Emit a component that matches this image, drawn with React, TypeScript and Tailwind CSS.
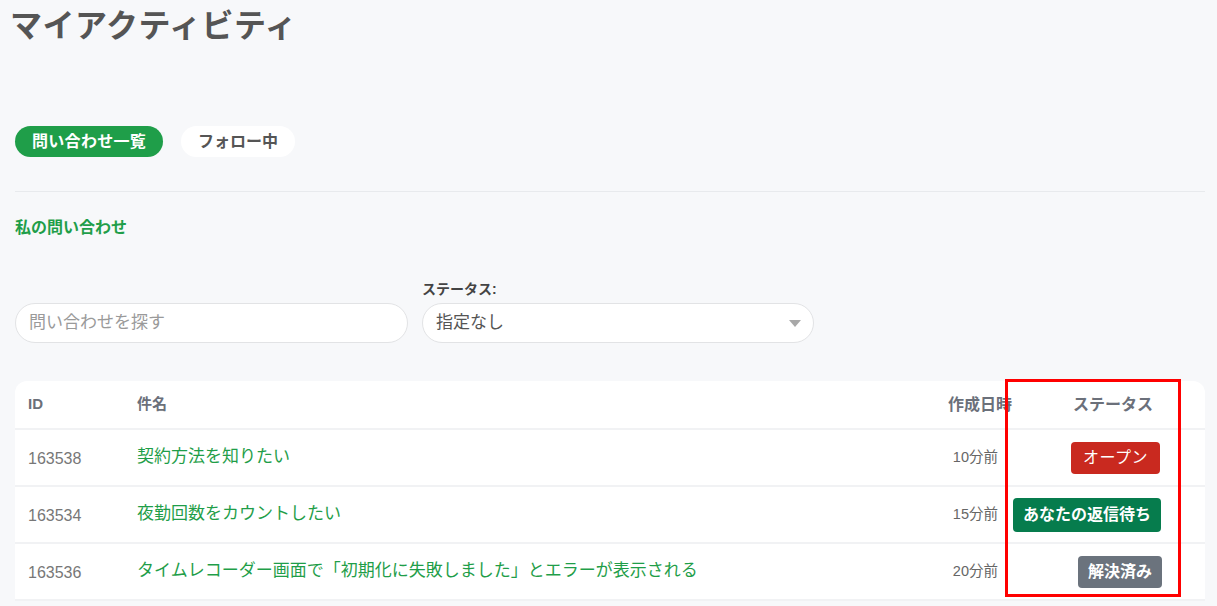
import React from "react";

const rows = [
  { id: "163538", title: "契約方法を知りたい", date: "10分前", status: "open" },
  { id: "163534", title: "夜勤回数をカウントしたい", date: "15分前", status: "waiting" },
  { id: "163536", title: "タイムレコーダー画面で「初期化に失敗しました」とエラーが表示される", date: "20分前", status: "solved" },
];

function Badge({ status }: { status: string }) {
  if (status === "open")
    return (
      <span className="mr-[2px] inline-flex h-[32px] items-center rounded-[4px] bg-[#c9291f] px-[12px] text-[16px] tracking-[0.5px] text-white">
        オープン
      </span>
    );
  if (status === "waiting")
    return (
      <span className="mr-[1px] inline-flex h-[34px] items-center rounded-[4px] bg-[#067c4d] px-[10px] text-[16px] font-bold text-white">
        あなたの返信待ち
      </span>
    );
  return (
    <span className="inline-flex h-[32px] items-center rounded-[4px] bg-[#6b737d] px-[10px] text-[16px] font-bold text-white">
      解決済み
    </span>
  );
}

export default function App() {
  return (
    <div className="min-h-[606px] w-full overflow-hidden bg-[#f7f8fa] font-['Liberation_Sans','Noto_Sans_CJK_JP',sans-serif]">
      <div className="ml-[15px] w-[1190px]">
        <h1 className="-ml-[5px] mt-[8px] h-[36px] text-[32px] font-bold leading-[36px] tracking-[0.5px] text-[#555555]">
          マイアクティビティ
        </h1>

        <div className="mt-[82px] flex gap-[18px]">
          <button className="h-[31px] rounded-full bg-[#1f9e49] px-[17px] text-[16px] font-bold leading-[31px] tracking-[0.3px] text-white">
            問い合わせ一覧
          </button>
          <button className="h-[31px] rounded-full bg-white px-[17px] text-[16px] font-bold leading-[31px] text-[#555555]">
            フォロー中
          </button>
        </div>

        <div className="mt-[34px] h-px bg-[#e8eaed]" />

        <div className="mt-[24px] h-[24px] text-[16px] font-bold leading-[24px] text-[#1f9e49]">
          私の問い合わせ
        </div>

        <div className="mt-[39px] flex items-end gap-[14px]">
          <div className="flex h-[40px] w-[393px] items-center rounded-full border border-[#e2e3e5] bg-white pl-[13px] text-[17px] text-[#9a9a9a]">
            問い合わせを探す
          </div>
          <div className="flex flex-col">
            <div className="mb-[4px] h-[20px] text-[14px] font-bold leading-[20px] text-[#444444]">
              ステータス:
            </div>
            <div className="flex h-[40px] w-[392px] items-center justify-between rounded-full border border-[#e2e3e5] bg-white pl-[13px] pr-[12px] text-[17px] text-[#555555]">
              <span>指定なし</span>
              <svg width="12" height="7" viewBox="0 0 12 7">
                <path d="M0 0 L12 0 L6 7 Z" fill="#a8a8a8" />
              </svg>
            </div>
          </div>
        </div>

        <div className="relative mt-[38px] rounded-t-[12px] bg-white">
          <div className="flex h-[49px] items-center border-b-2 border-[#f1f2f4] pl-[13px] text-[15px] font-bold text-[#6b707a]">
            <div className="w-[109px]">ID</div>
            <div className="flex-1">件名</div>
            <div className="w-[74px] pr-[1px] text-right text-[16px]">作成日時</div>
            <div className="w-[192px] pr-[52px] text-right text-[16px]">ステータス</div>
          </div>
          {rows.map((r) => (
            <div key={r.id} className="flex h-[57px] items-center border-b-2 border-[#f1f2f4] pl-[13px]">
              <div className="w-[109px] pt-[3px] text-[16px] text-[#777777]">{r.id}</div>
              <div className="flex-1 pb-[2px] text-[17px] text-[#1f9e49]">{r.title}</div>
              <div className="w-[74px] pr-[15px] text-right text-[14.5px] text-[#666666]">{r.date}</div>
              <div className="flex w-[192px] justify-end pr-[43px]">
                <Badge status={r.status} />
              </div>
            </div>
          ))}
          <div className="pointer-events-none absolute left-[990px] top-[-2px] h-[218px] w-[176px] border-[3px] border-[#ff0000]" />
        </div>
      </div>
    </div>
  );
}
